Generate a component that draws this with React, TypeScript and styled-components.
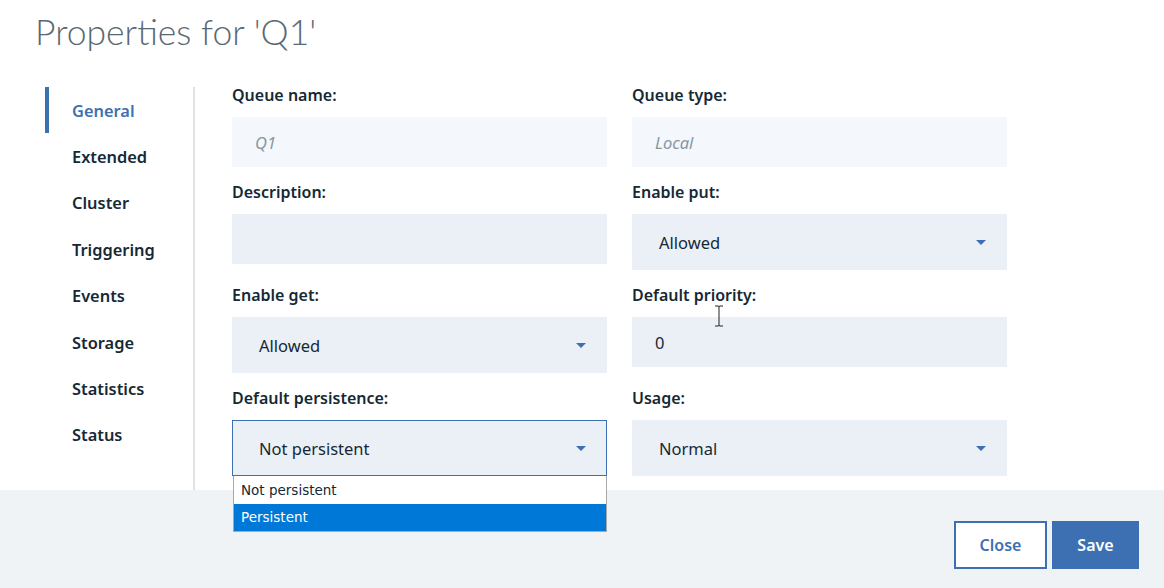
import styled, { createGlobalStyle } from "styled-components";

const GlobalStyle = createGlobalStyle`
  html, body {
    margin: 0;
    padding: 0;
    background: #ffffff;
  }
  body {
    font-family: "Noto Sans", "Liberation Sans", sans-serif;
    color: #152935;
  }
`;

const Page = styled.div`
  position: relative;
  width: 1164px;
  height: 588px;
  display: flex;
  flex-direction: column;
  overflow: hidden;
`;

const Header = styled.div`
  height: 84px;
  padding-left: 35px;
  box-sizing: border-box;
`;

const Title = styled.h1`
  margin: 0;
  padding-top: 10px;
  font-family: Lato, "Open Sans", sans-serif;
  font-weight: 300;
  font-size: 35.5px;
  line-height: 44px;
  color: #5a6872;
`;

const Body = styled.div`
  display: flex;
  height: 406px;
`;

const Nav = styled.nav`
  width: 148px;
  margin-left: 45px;
  margin-top: 3px;
  border-right: 2px solid #dfe3e6;
  display: flex;
  flex-direction: column;
`;

const NavItem = styled.div<{ $active?: boolean }>`
  height: 46.4px;
  display: flex;
  align-items: center;
  box-sizing: border-box;
  padding-left: 23px;
  border-left: 4px solid ${(p) => (p.$active ? "#3d70b2" : "transparent")};
  font-weight: 600;
  font-size: 16.4px;
  color: ${(p) => (p.$active ? "#3d70b2" : "#152935")};
`;

const Form = styled.div`
  display: grid;
  grid-template-columns: 375px 375px;
  column-gap: 25px;
  row-gap: 13px;
  align-items: start;
  align-content: start;
  margin-top: -1px;
  padding-left: 37px;
`;

const Field = styled.div`
  position: relative;
  display: flex;
  flex-direction: column;
`;

const Label = styled.label`
  font-weight: 600;
  font-size: 16px;
  line-height: 24px;
  margin-bottom: 10px;
  color: #152935;
`;

const TextInput = styled.div<{ $disabled?: boolean }>`
  height: 50px;
  box-sizing: border-box;
  padding-left: 23px;
  display: flex;
  align-items: center;
  font-size: 16.5px;
  background: ${(p) => (p.$disabled ? "#f4f7fb" : "#ebf0f7")};
  color: ${(p) => (p.$disabled ? "#8897a2" : "#152935")};
  font-style: ${(p) => (p.$disabled ? "italic" : "normal")};
`;

const Select = styled.div<{ $focused?: boolean }>`
  height: 56px;
  box-sizing: border-box;
  padding: 0 20px 0 26px;
  display: flex;
  align-items: center;
  justify-content: space-between;
  font-size: 16.5px;
  background: #ebf0f7;
  color: #152935;
  border: 1px solid ${(p) => (p.$focused ? "#3d70b2" : "transparent")};
`;

const Caret = styled.span`
  width: 0;
  height: 0;
  border-left: 5px solid transparent;
  border-right: 5px solid transparent;
  border-top: 5px solid #3d70b2;
`;

const OptionList = styled.div`
  position: absolute;
  top: 100%;
  left: 1px;
  right: 0;
  z-index: 5;
  background: #ffffff;
  border: 1px solid #a9a9a9;
  border-top: none;
  font-family: "DejaVu Sans", "Liberation Sans", sans-serif;
  font-size: 13.5px;
`;

const Option = styled.div<{ $selected?: boolean }>`
  height: 27.5px;
  display: flex;
  align-items: center;
  padding-left: 7px;
  background: ${(p) => (p.$selected ? "#0078d7" : "#ffffff")};
  color: ${(p) => (p.$selected ? "#ffffff" : "#152935")};
`;

const Footer = styled.div`
  flex: 1;
  background: #f0f3f6;
  display: flex;
  justify-content: flex-end;
  align-items: flex-start;
  gap: 5px;
  padding: 31px 25px 0 0;
`;

const Button = styled.button<{ $primary?: boolean }>`
  height: 48px;
  box-sizing: border-box;
  padding: 0 22px;
  font-family: "Noto Sans", "Liberation Sans", sans-serif;
  font-weight: 600;
  font-size: 16px;
  border: 2px solid #3d70b2;
  background: ${(p) => (p.$primary ? "#3d70b2" : "#ffffff")};
  color: ${(p) => (p.$primary ? "#ffffff" : "#3d70b2")};
  min-width: ${(p) => (p.$primary ? "87px" : "93px")};
`;

const Cursor = styled.svg`
  position: absolute;
  left: 714px;
  top: 305px;
  z-index: 10;
`;

const navItems = [
  "General",
  "Extended",
  "Cluster",
  "Triggering",
  "Events",
  "Storage",
  "Statistics",
  "Status",
];

export default function App() {
  return (
    <Page>
      <GlobalStyle />
      <Header>
        <Title>Properties for 'Q1'</Title>
      </Header>
      <Body>
        <Nav>
          {navItems.map((item, i) => (
            <NavItem key={item} $active={i === 0}>
              {item}
            </NavItem>
          ))}
        </Nav>
        <Form>
          <Field>
            <Label>Queue name:</Label>
            <TextInput $disabled>Q1</TextInput>
          </Field>
          <Field>
            <Label>Queue type:</Label>
            <TextInput $disabled>Local</TextInput>
          </Field>
          <Field>
            <Label>Description:</Label>
            <TextInput />
          </Field>
          <Field>
            <Label>Enable put:</Label>
            <Select>
              Allowed
              <Caret />
            </Select>
          </Field>
          <Field>
            <Label>Enable get:</Label>
            <Select>
              Allowed
              <Caret />
            </Select>
          </Field>
          <Field>
            <Label>Default priority:</Label>
            <TextInput>0</TextInput>
          </Field>
          <Field>
            <Label>Default persistence:</Label>
            <Select $focused>
              Not persistent
              <Caret />
            </Select>
            <OptionList>
              <Option>Not persistent</Option>
              <Option $selected>Persistent</Option>
            </OptionList>
          </Field>
          <Field>
            <Label>Usage:</Label>
            <Select>
              Normal
              <Caret />
            </Select>
          </Field>
        </Form>
      </Body>
      <Footer>
        <Button>Close</Button>
        <Button $primary>Save</Button>
      </Footer>
      <Cursor width="10" height="22" viewBox="0 0 10 22">
        <path
          d="M1 1 H4 Q5 1 5 2 V20 Q5 21 4 21 H1 M9 1 H6 Q5 1 5 2 M5 20 Q5 21 6 21 H9"
          fill="none"
          stroke="#222"
          strokeWidth="1"
        />
      </Cursor>
    </Page>
  );
}
